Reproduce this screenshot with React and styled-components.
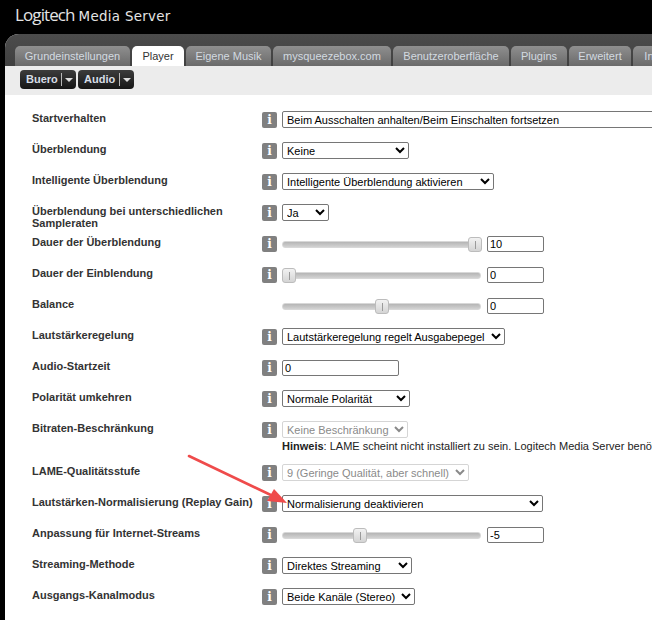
import React from "react";
import styled, { createGlobalStyle } from "styled-components";

const Global = createGlobalStyle`
  html, body { margin: 0; padding: 0; background: #000; }
  body { width: 652px; height: 620px; overflow: hidden; font-family: "Liberation Sans", Arial, sans-serif; }
`;

const Page = styled.div`
  position: relative;
  width: 652px;
  height: 620px;
  overflow: hidden;
  background: #000;
`;
const Header = styled.header`
  height: 34px;
  box-sizing: border-box;
  padding: 4px 0 0 15px;
  display: flex;
  align-items: baseline;
  gap: 4px;
  color: #e4e4e4;
`;
const Brand = styled.span`
  font: 400 17px/22px "Open Sans", sans-serif;
  letter-spacing: -0.9px;
`;
const Product = styled.span`
  font: 400 13.4px/22px "DejaVu Sans", sans-serif;
  letter-spacing: 0.3px;
`;
const Panel = styled.div`
  margin-left: 5px;
  width: 700px;
  height: 586px;
  border-radius: 14px 0 0 0;
  background: #fff;
  overflow: hidden;
`;
const TabBar = styled.nav`
  height: 32px;
  box-sizing: border-box;
  padding: 12px 0 0 10px;
  display: flex;
  gap: 2px;
  background: linear-gradient(#4c4c4c, #404040);
`;
const Tab = styled.div`
  box-sizing: border-box;
  width: ${(p) => p.$w}px;
  height: 20px;
  flex: none;
  border-radius: 5px 5px 0 0;
  text-align: center;
  font-size: 11px;
  line-height: 20px;
  ${(p) =>
    p.$active
      ? "background:#fff;color:#333;"
      : "background:linear-gradient(#8f8f8f,#6a6a6a);color:#d3dae0;font-weight:400;"}
`;
const Toolbar = styled.div`
  height: 29px;
  box-sizing: border-box;
  padding: 4px 0 0 15px;
  display: flex;
  gap: 2px;
  background: #ececec;
`;
const MenuButton = styled.div`
  box-sizing: border-box;
  width: 56px;
  height: 19px;
  padding-left: 6px;
  border-radius: 4px;
  display: flex;
  align-items: center;
  background: linear-gradient(#3c3c3c, #161616);
  color: #d6dde6;
  font: bold 11px/17px "Liberation Sans", sans-serif;
`;
const MenuLabel = styled.span`
  flex: 1;
`;
const Caret = styled.span`
  width: 13px;
  height: 13px;
  flex: none;
  border-left: 1px solid #b8b8b8;
  position: relative;
  margin-right: 1px;
  &::after {
    content: "";
    position: absolute;
    left: 3px;
    top: 5px;
    border: 4px solid transparent;
    border-top: 4px solid #ddd;
    border-bottom: 0;
  }
`;
const Form = styled.main`
  padding: 16px 0 0 27px;
  display: flex;
  flex-direction: column;
`;
const Row = styled.div`
  display: grid;
  grid-template-columns: 225px 15px 1fr;
  column-gap: 5px;
  height: ${(p) => p.$h || 31}px;
  align-items: start;
`;
const Label = styled.label`
  font: bold 11px/12px "Liberation Sans", sans-serif;
  color: #333;
  padding-top: 1px;
  white-space: pre-line;
`;
const Info = styled.span`
  width: 15px;
  height: 16px;
  margin-top: 1px;
  border-radius: 2px;
  background: #808080;
  color: #fff;
  font: bold 12px/16px "DejaVu Serif", serif;
  text-align: center;
  visibility: ${(p) => (p.$hidden ? "hidden" : "visible")};
`;
const Control = styled.div`
  display: flex;
  flex-direction: column;
  align-items: flex-start;
`;
const Select = styled.select`
  box-sizing: border-box;
  width: ${(p) => p.$w}px;
  height: 17px;
  margin: 0;
  padding: 0;
  flex: none;
  font: 11px "Liberation Sans", sans-serif;
  color: #000;
  background: #fff;
  border: 1px solid #767676;
  border-radius: 2px;
  &:disabled {
    color: #8a8a8a;
    border-color: #d5d5d5;
    opacity: 1;
  }
`;
const TextInput = styled.input`
  box-sizing: border-box;
  width: ${(p) => p.$w}px;
  height: 16px;
  margin: 0;
  padding: 0 2px;
  flex: none;
  border: 1px solid #767676;
  border-radius: 2px;
  font: 11px "Liberation Sans", sans-serif;
  color: #000;
  background: #fff;
`;
const SliderRow = styled.div`
  display: flex;
  align-items: center;
  gap: 6px;
  height: 16px;
  margin-top: 1px;
`;
const Track = styled.div`
  position: relative;
  width: 199px;
  height: 7px;
  border-radius: 3px;
  background: linear-gradient(#b5b5b5, #d2d2d2);
  border: 1px solid #d8d8d8;
  box-sizing: border-box;
`;
const Thumb = styled.span`
  position: absolute;
  top: -5px;
  box-sizing: border-box;
  width: 14px;
  height: 15px;
  border: 1px solid #bcbcbc;
  border-radius: 3px;
  background: linear-gradient(#f2f2f2, #d4d4d4);
  &::after {
    content: "";
    position: absolute;
    left: 6px;
    top: 3px;
    width: 1px;
    height: 8px;
    background: #9a9a9a;
  }
`;
const Note = styled.div`
  font: 11px/13px "Liberation Sans", sans-serif;
  color: #222;
  white-space: nowrap;
  margin-top: 2px;
`;
const NoteKey = styled.b`
  font-weight: bold;
`;
const Annotation = styled.svg`
  position: absolute;
  left: 180px;
  top: 450px;
  width: 120px;
  height: 65px;
  pointer-events: none;
`;

const tabs = [
  ["Grundeinstellungen", 115],
  ["Player", 52, true],
  ["Eigene Musik", 85],
  ["mysqueezebox.com", 118],
  ["Benutzeroberfläche", 116],
  ["Plugins", 56],
  ["Erweitert", 62],
  ["Informationen", 90],
];

const Slider = ({ left, value }) => (
  <SliderRow>
    <Track>
      <Thumb style={{ left: `${left}px` }} />
    </Track>
    <TextInput $w={57} defaultValue={value} />
  </SliderRow>
);

const Choice = ({ w, text, disabled }) => (
  <Select $w={w} disabled={disabled} defaultValue={text}>
    <option>{text}</option>
  </Select>
);

const rows = [
  { label: "Startverhalten", w: 420, text: "Beim Ausschalten anhalten/Beim Einschalten fortsetzen" },
  { label: "Überblendung", w: 127, text: "Keine" },
  { label: "Intelligente Überblendung", w: 212, text: "Intelligente Überblendung aktivieren" },
  { label: "Überblendung bei unterschiedlichen\nSampleraten", w: 47, text: "Ja" },
  { label: "Dauer der Überblendung", slider: 185, value: "10" },
  { label: "Dauer der Einblendung", slider: -1, value: "0" },
  { label: "Balance", slider: 92, value: "0", noInfo: true },
  { label: "Lautstärkeregelung", w: 223, text: "Lautstärkeregelung regelt Ausgabepegel" },
  { label: "Audio-Startzeit", input: "0" },
  { label: "Polarität umkehren", w: 128, text: "Normale Polarität" },
  {
    label: "Bitraten-Beschränkung",
    w: 126,
    text: "Keine Beschränkung",
    disabled: true,
    h: 43,
    note: "LAME scheint nicht installiert zu sein. Logitech Media Server benötigt LAME, um die Bitrate zu beschränken.",
  },
  { label: "LAME-Qualitätsstufe", w: 187, text: "9 (Geringe Qualität, aber schnell)", disabled: true },
  { label: "Lautstärken-Normalisierung (Replay Gain)", w: 261, text: "Normalisierung deaktivieren" },
  { label: "Anpassung für Internet-Streams", slider: 70, value: "-5" },
  { label: "Streaming-Methode", w: 130, text: "Direktes Streaming" },
  { label: "Ausgangs-Kanalmodus", w: 133, text: "Beide Kanäle (Stereo)" },
];

export default function App() {
  return (
    <Page>
      <Global />
      <Header>
        <Brand>Logitech</Brand>
        <Product>Media Server</Product>
      </Header>
      <Panel>
        <TabBar>
          {tabs.map(([name, w, active]) => (
            <Tab key={name} $w={w} $active={active}>
              {name}
            </Tab>
          ))}
        </TabBar>
        <Toolbar>
          <MenuButton>
            <MenuLabel>Buero</MenuLabel>
            <Caret />
          </MenuButton>
          <MenuButton>
            <MenuLabel>Audio</MenuLabel>
            <Caret />
          </MenuButton>
        </Toolbar>
        <Form>
          {rows.map((r) => (
            <Row key={r.label} $h={r.h}>
              <Label>{r.label}</Label>
              <Info $hidden={r.noInfo}>i</Info>
              <Control>
                {r.slider !== undefined ? (
                  <Slider left={r.slider} value={r.value} />
                ) : r.input ? (
                  <SliderRow>
                    <TextInput $w={117} defaultValue={r.input} />
                  </SliderRow>
                ) : (
                  <Choice w={r.w} text={r.text} disabled={r.disabled} />
                )}
                {r.note && (
                  <Note>
                    <NoteKey>Hinweis</NoteKey>: {r.note}
                  </Note>
                )}
              </Control>
            </Row>
          ))}
        </Form>
      </Panel>
      <Annotation viewBox="0 0 120 65">
        <path d="M9 6 L95 47" stroke="#ef4b4b" strokeWidth="2.6" strokeLinecap="round" />
        <path d="M107 53 L87 51 L94 39 Z" fill="#ef4b4b" />
      </Annotation>
    </Page>
  );
}
